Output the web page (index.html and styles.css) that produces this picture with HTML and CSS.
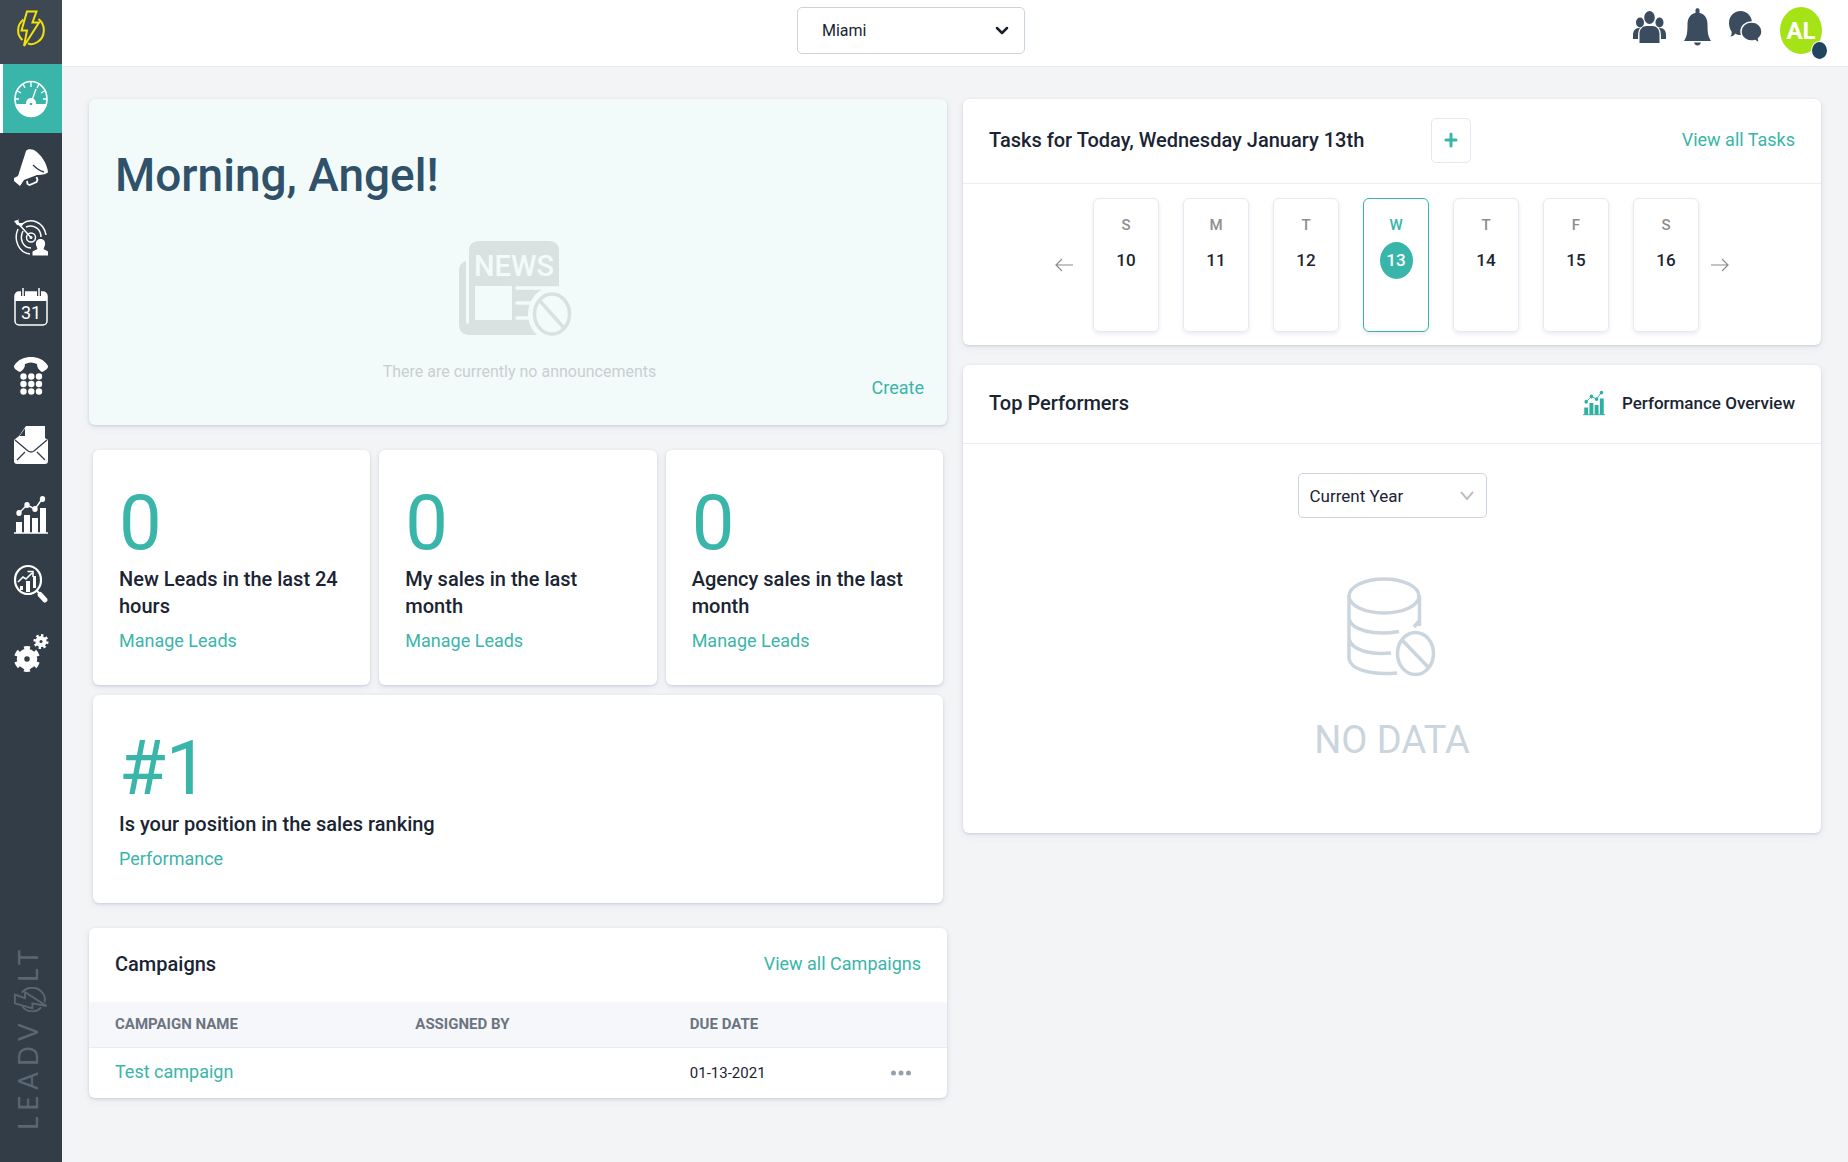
FILE: index.html
```html
<!DOCTYPE html>
<html lang="en">
<head>
<meta charset="utf-8">
<meta name="viewport" content="width=device-width, initial-scale=1">
<title>LeadVolt – Dashboard</title>
<link rel="stylesheet" href="styles.css">
</head>
<body>
<svg class="defs" aria-hidden="true">
  <symbol id="chart" viewBox="0 0 36 40">
    <path d="M3 27h6v11H3zM11 20h6v18h-6zM19 23h6v15h-6zM27 13h6v25h-6z" fill="currentColor"/>
    <path d="M1 38h34M6 18l8-8 8 4 7-10" fill="none" stroke="currentColor" stroke-width="1.4"/>
    <g fill="currentColor"><ellipse cx="6" cy="18" rx="2.7" ry="3"/><ellipse cx="14" cy="10" rx="2.7" ry="3"/><ellipse cx="22" cy="14" rx="2.7" ry="3"/><ellipse cx="29.500" cy="4" rx="2.700" ry="3"/></g>
  </symbol>
  <symbol id="bolt" viewBox="0 0 28 38">
    <g fill="none" stroke="currentColor" stroke-width="2">
      <path d="M10 1.500h9.500L15.500 12.500h6.500L7 36l3-15.500H4.500z"/>
      <path d="M6.500 9.500C-.5 15-.5 25 5.500 30M21.500 9C29 15 28.500 27 20.500 32c-3 2-7 2.500-9.500 1.500"/>
    </g>
  </symbol>
</svg>

<div class="app">
  <aside class="sidebar">
    <a class="brand" href="#" aria-label="LeadVolt home"><svg width="28" height="38"><use href="#bolt"/></svg></a>
    <nav class="nav" aria-label="Main">
      <a class="nav-item active" href="#" aria-label="Dashboard">
        <svg width="36" height="40" viewBox="0 0 36 40">
          <ellipse cx="18" cy="20" rx="16" ry="17.500" fill="none" stroke="#fff" stroke-width="1.600"/>
          <path d="M2 25h32c-2 8-8.500 13-16 13S4 33 2 25z" fill="#fff"/>
          <circle cx="18" cy="24" r="5" fill="#fff"/><circle cx="18" cy="25" r="1.300" fill="#3ab5a9"/>
          <path d="M18 24l5-14M18 3v5M10 5l2 4M26 5l-2 4M4.500 12l3.500 2M31.500 12L28 14M2 20h4M34 20h-4" stroke="#fff" stroke-width="1.400"/>
        </svg>
      </a>
      <a class="nav-item" href="#" aria-label="Campaigns">
        <svg width="36" height="40" viewBox="0 0 36 40">
          <path d="M13 3c1-2 5-2 8-1 8 5 13 14 14 22-1 2-5 3-11 3L11 32l-4 6-6-5V30l4-2z" fill="#fff"/>
          <path d="M20 17c3 3 6 6 11 7" fill="none" stroke="#323d48" stroke-width="1.300"/>
          <path d="M14 33l.500 3 2 1 7-3 1-2-1-3" fill="none" stroke="#fff" stroke-width="1.800"/>
        </svg>
      </a>
      <a class="nav-item" href="#" aria-label="Leads">
        <svg width="36" height="40" viewBox="0 0 36 40">
          <g fill="none" stroke="#fff" stroke-width="1.500">
            <path d="M9 7C18 0 31 5 33 18M5 12C0 23 6 36 17 37M13 10C21 7 28 12 28 20M10 14C6 22 10 31 18 31"/>
            <circle cx="18" cy="20.500" r="4.500"/><path d="M3 4l15 16.500"/>
          </g>
          <path d="M5 1l1 5h5l-2 3-5-1-3-4 4-1z" fill="#fff"/><circle cx="18" cy="20.500" r="1.500" fill="#fff"/>
          <path d="M27.500 22c3.500 0 5 2.500 4.500 6l-1.500 4 4.500 2.500v4H19.500v-4L24.500 32 23 28c-.5-3.500 1-6 4.500-6z" fill="#fff"/>
        </svg>
      </a>
      <a class="nav-item" href="#" aria-label="Calendar">
        <svg width="36" height="40" viewBox="0 0 36 40">
          <rect x="2" y="5" width="32" height="33" rx="4" fill="none" stroke="#fff" stroke-width="1.500"/>
          <path d="M2 14V9c0-3 1-4 4-4h24c3 0 4 1 4 4v5z" fill="#fff"/>
          <path d="M10 1v8M26 1v8" stroke="#323d48" stroke-width="4"/><path d="M10 1v8M26 1v8" stroke="#fff" stroke-width="1.500"/>
          <text x="18" y="32" class="cal-text">31</text>
        </svg>
      </a>
      <a class="nav-item" href="#" aria-label="Dialer">
        <svg width="36" height="40" viewBox="0 0 36 40">
          <path d="M1 10C5 3 12 1 18 1s13 2 17 9c.500 1-1 4-6 6-3-2-5-4-5-8-4-2-8-2-12 0 0 4-2 6-5 8-5-2-6.500-5-6-6z" fill="#fff"/>
          <g fill="#fff"><circle cx="10.500" cy="20.500" r="3.200"/><circle cx="18.300" cy="20.500" r="3.200"/><circle cx="26" cy="20.500" r="3.200"/><circle cx="10.500" cy="28" r="3.200"/><circle cx="18.300" cy="28" r="3.200"/><circle cx="26" cy="28" r="3.200"/><circle cx="10.500" cy="35.500" r="3.200"/><circle cx="18.300" cy="35.500" r="3.200"/><circle cx="26" cy="35.500" r="3.200"/></g>
        </svg>
      </a>
      <a class="nav-item" href="#" aria-label="Mail">
        <svg width="36" height="40" viewBox="0 0 36 40">
          <path d="M13 1h19v12l3 2v21q0 3-3 3H4q-3 0-3-3V15l5-4z" fill="#fff"/>
          <path d="M6.500 11L12 3.500V11z" fill="#323d48"/>
          <path d="M2 15l13 11q3 2 6 0L34 15M4 35l8-8M32 35l-8-8" fill="none" stroke="#323d48" stroke-width="1.300"/>
        </svg>
      </a>
      <a class="nav-item" href="#" aria-label="Performance"><svg width="36" height="40"><use href="#chart"/></svg></a>
      <a class="nav-item" href="#" aria-label="Reports">
        <svg width="36" height="40" viewBox="0 0 36 40">
          <ellipse cx="15" cy="16" rx="13" ry="14" fill="none" stroke="#fff" stroke-width="2.200"/>
          <path d="M24 27l2 2" stroke="#fff" stroke-width="2"/><path d="M27 30.500l5 5.500" stroke="#fff" stroke-width="5" stroke-linecap="round"/>
          <path d="M7 22h3v4H7zM13 17h4v11h-4zM20 12h3v12h-3z" fill="#fff"/>
          <path d="M5 18l5-5 3 2 6-6M14.500 7.500H20V13" fill="none" stroke="#fff" stroke-width="1.600"/>
        </svg>
      </a>
      <a class="nav-item" href="#" aria-label="Settings">
        <svg width="36" height="40" viewBox="0 0 36 40">
          <g fill="none" stroke="#fff">
            <circle cx="14" cy="26" r="6.500" stroke-width="7.500"/>
            <circle cx="14" cy="26" r="11" stroke-width="4" pathLength="12" stroke-dasharray="1 1" stroke-dashoffset=".5" transform="rotate(30 14 26)"/>
            <circle cx="28" cy="8.500" r="3.600" stroke-width="4"/>
            <circle cx="28" cy="8.500" r="6.300" stroke-width="2.500" pathLength="16" stroke-dasharray="1 1"/>
          </g>
        </svg>
      </a>
    </nav>
    <div class="wordmark" aria-label="LeadVolt">
      <span>LEADV</span><svg width="26" height="35"><use href="#bolt"/></svg><span>LT</span>
    </div>
  </aside>

  <div class="page">
    <header class="topbar">
      <div class="select-box office">
        <select aria-label="Office"><option>Miami</option></select>
        <svg width="14" height="10" viewBox="0 0 14 10"><path d="M2 2l5 5 5-5" fill="none" stroke="#18222f" stroke-width="2.500" stroke-linecap="round" stroke-linejoin="round"/></svg>
      </div>
      <div class="tools">
        <button class="tool" aria-label="Team">
          <svg width="33" height="32" viewBox="0 0 33 32" fill="#3c4c5f">
            <ellipse cx="16.500" cy="6.500" rx="5.300" ry="6.500"/><ellipse cx="7" cy="11.500" rx="4" ry="5"/><ellipse cx="26.500" cy="11.500" rx="4" ry="5"/>
            <path d="M6.500 32V23c0-5 3-8 7-8h6c4 0 7 3 7 8v9zM5 28H0v-4c0-4 2-7 6-7h1c-2 3-2 6-2 11zM28 28h5v-4c0-4-2-7-6-7h-1c2 3 2 6 2 11z"/>
          </svg>
        </button>
        <button class="tool" aria-label="Notifications">
          <svg width="27" height="38" viewBox="0 0 27 38" fill="#3c4c5f">
            <path d="M11.500 5V2c0-2.500 4-2.500 4 0v3c6 1 8 6 8 12 0 9 1 12 3.500 16H0c2.500-4 3.500-7 3.500-16 0-6 2-11 8-12zM10 34.500h7c-.5 2-2 3-3.500 3s-3-1-3.500-3z"/>
          </svg>
        </button>
        <button class="tool" aria-label="Messages">
          <svg width="33" height="32" viewBox="0 0 33 32">
            <path d="M11.500 0C18 0 23 5 23 12s-5 12-11.500 12c-2 0-4-.5-5-1.500-1.500 2-3 3-5 3 1-1.500 1.500-3 1-5C1 18.500 0 15.500 0 12 0 5 5 0 11.500 0z" fill="#3c4c5f"/>
            <path d="M22.500 11C28.500 11 33 15 33 20.500c0 3-1.500 5.500-3.500 7 0 1.500.500 2.500 1.500 4-2 0-3.500-1-5-2-6.500 2-14-2-14-9C12 15 16.500 11 22.500 11z" fill="#3c4c5f" stroke="#fff" stroke-width="1.500"/>
          </svg>
        </button>
        <button class="avatar" aria-label="Account">AL<span class="status"></span></button>
      </div>
    </header>

    <main class="content">
      <div class="column">
        <section class="card announce">
          <h1>Morning, Angel!</h1>
          <svg class="news" width="113" height="97" viewBox="0 0 113 97">
            <path d="M7 21v60q0 3 1.500 3T10 81V11Q10 1 20 1h70q10 0 10 10v84H11Q0 95 0 84V31q0-8 7-10z" fill="#d9e2e0"/>
            <rect x="16" y="46" width="37" height="34" rx="1" fill="#f2fbfa"/>
            <path d="M58 48h42M58 63h20M58 78h20" stroke="#f2fbfa" stroke-width="3.500" stroke-linecap="round"/>
            <ellipse cx="93" cy="74" rx="24" ry="27" fill="#f2fbfa"/>
            <ellipse cx="93" cy="74" rx="17.500" ry="20" fill="none" stroke="#d9e0e0" stroke-width="3.500"/>
            <path d="M81 61l24 27" stroke="#d9e0e0" stroke-width="3.500"/>
            <text x="55" y="36" class="news-text">NEWS</text>
          </svg>
          <div class="announce-foot">
            <p>There are currently no announcements</p>
            <a href="#">Create</a>
          </div>
        </section>

        <div class="stats">
          <section class="card stat"><strong>0</strong><h2>New Leads in the last 24 hours</h2><a href="#">Manage Leads</a></section>
          <section class="card stat"><strong>0</strong><h2>My sales in the last month</h2><a href="#">Manage Leads</a></section>
          <section class="card stat"><strong>0</strong><h2>Agency sales in the last month</h2><a href="#">Manage Leads</a></section>
          <section class="card stat wide"><strong>#1</strong><h2>Is your position in the sales ranking</h2><a href="#">Performance</a></section>
        </div>

        <section class="card">
          <div class="card-head campaigns-head"><h2>Campaigns</h2><a href="#">View all Campaigns</a></div>
          <table class="campaigns">
            <thead><tr><th class="c-name">Campaign name</th><th class="c-by">Assigned by</th><th>Due date</th><th class="c-more"></th></tr></thead>
            <tbody><tr>
              <td><a href="#">Test campaign</a></td><td></td><td>01-13-2021</td>
              <td class="c-more"><button aria-label="More actions"><svg width="20" height="6" viewBox="0 0 20 6" fill="#95a1af"><circle cx="2.500" cy="3" r="2.500"/><circle cx="10" cy="3" r="2.500"/><circle cx="17.500" cy="3" r="2.500"/></svg></button></td>
            </tr></tbody>
          </table>
        </section>
      </div>

      <div class="column right">
        <section class="card">
          <div class="card-head tasks-head">
            <h2>Tasks for Today, Wednesday January 13th</h2>
            <button class="add" aria-label="Add task"><svg width="14" height="16" viewBox="0 0 14 16"><path d="M7 2v12M2 8h10" stroke="#3ab5a9" stroke-width="3" stroke-linecap="round"/></svg></button>
            <a href="#">View all Tasks</a>
          </div>
          <div class="week">
            <button class="arrow" aria-label="Previous week"><svg width="18" height="14" viewBox="0 0 18 14"><path d="M18 7H1M7 1L1 7l6 6" fill="none" stroke="#8c8c8c" stroke-width="1.200"/></svg></button>
            <button class="day"><span>S</span><b>10</b></button>
            <button class="day"><span>M</span><b>11</b></button>
            <button class="day"><span>T</span><b>12</b></button>
            <button class="day today"><span>W</span><b>13</b></button>
            <button class="day"><span>T</span><b>14</b></button>
            <button class="day"><span>F</span><b>15</b></button>
            <button class="day"><span>S</span><b>16</b></button>
            <button class="arrow next" aria-label="Next week"><svg width="18" height="14" viewBox="0 0 18 14"><path d="M0 7h17M11 1l6 6-6 6" fill="none" stroke="#8c8c8c" stroke-width="1.200"/></svg></button>
          </div>
        </section>

        <section class="card">
          <div class="card-head perf-head">
            <h2>Top Performers</h2>
            <a class="overview" href="#"><svg width="24" height="26"><use href="#chart"/></svg>Performance Overview</a>
          </div>
          <div class="perf-body">
            <div class="select-box period">
              <select aria-label="Period"><option>Current Year</option></select>
              <svg width="14" height="10" viewBox="0 0 14 10"><path d="M1 1l6 7 6-7" fill="none" stroke="#bcbfc3" stroke-width="2"/></svg>
            </div>
            <svg class="db" width="90" height="102" viewBox="0 0 90 102" fill="none" stroke="#cbd5dd" stroke-width="3.500">
              <ellipse cx="37" cy="20" rx="35" ry="17"/>
              <path d="M2 20v63c2 10 20 16.500 48 14M2 43c3 11 24 17 50 12.500M2 63c3 11 20 16 42 14M72.500 20v30M73 44l-6 7"/>
              <ellipse cx="68.500" cy="77.500" rx="18" ry="21"/><path d="M55 64l27 28"/>
            </svg>
            <p class="no-data">NO DATA</p>
          </div>
        </section>
      </div>
    </main>
  </div>
</div>
</body>
</html>
```
FILE: styles.css
```css
* { box-sizing: border-box; }
body {
  margin: 0;
  background: #f3f4f6;
  color: #1a2433;
  font-family: Roboto, "Noto Sans", sans-serif;
  font-size: 18px;
  line-height: 24px;
}
h1, h2, p { margin: 0; }
h2 { font-size: 20px; font-weight: 500; line-height: 27px; }
a { color: #3ab5a9; text-decoration: none; }
button, select { font: inherit; color: inherit; }
button { padding: 0; border: 0; background: none; cursor: pointer; }
svg { display: block; }
.defs { position: absolute; width: 0; height: 0; }

.app { display: flex; min-height: 100vh; }

.sidebar {
  display: flex;
  flex-direction: column;
  flex: 0 0 62px;
  background: #323d48;
}
.brand {
  display: grid;
  place-items: center;
  height: 64px;
  padding-bottom: 6px;
  background: #3d4853;
  color: #f3e10c;
}
.nav { display: flex; flex-direction: column; height: 624px; }
.nav-item { display: grid; place-items: center; flex: 1; color: #fff; }
.nav-item.active { background: #3ab5a9; box-shadow: inset 3px 0 #fff; }
.cal-text { fill: #fff; font-size: 18px; text-anchor: middle; }
.wordmark {
  display: flex;
  align-items: center;
  margin: auto auto 32px;
  writing-mode: vertical-rl;
  transform: rotate(180deg);
  color: #5b6671;
  font-family: Lato, sans-serif;
  font-size: 26px;
  line-height: 30px;
  letter-spacing: 6px;
}
.wordmark span { padding-left: 6px; }
.wordmark svg { transform: rotate(90deg); }

.page { flex: 1; min-width: 0; }
.topbar {
  display: flex;
  align-items: flex-start;
  justify-content: space-between;
  height: 67px;
  padding: 7px 26px 0 41.15%;
  background: #fff;
  border-bottom: 1px solid #e8edf1;
}
.tools { display: flex; gap: 18px; }
.tool { display: grid; place-items: center; height: 40px; }
.avatar {
  position: relative;
  width: 42px;
  height: 47px;
  border-radius: 50%;
  background: #a5e317;
  color: #fff;
  font-size: 24px;
  font-weight: 700;
}
.status {
  position: absolute;
  right: -6px;
  bottom: -6px;
  width: 17px;
  height: 19px;
  border: 1px solid #fff;
  border-radius: 50%;
  background: #21455e;
}

.select-box { position: relative; }
.select-box select {
  width: 100%;
  height: 100%;
  border: 1px solid #c9d4de;
  border-radius: 5px;
  background: #fff;
  appearance: none;
  font-size: 16px;
}
.select-box svg { position: absolute; right: 16px; top: 50%; margin-top: -5px; pointer-events: none; }
.office { width: 228px; height: 47px; }
.office select { padding: 0 24px; }
.period { width: 189px; height: 45px; }
.select-box.period select { padding: 0 11px; font-size: 17px; }
.period svg { right: 13px; }

.content {
  display: grid;
  grid-template-columns: minmax(0, 1fr) minmax(0, 1fr);
  align-items: start;
  gap: 16px;
  padding: 32px 27px;
}
.column { display: grid; gap: 25px; }
.column.right { gap: 20px; }
.card {
  background: #fff;
  border-radius: 6px;
  box-shadow: 0 1px 3px rgba(70, 90, 130, .22), 0 3px 8px rgba(70, 90, 130, .06);
}

.announce {
  display: flex;
  flex-direction: column;
  padding: 48px 23px 27px 26px;
  background: #f2fbfa;
}
.announce h1 { color: #2f5169; font-size: 46px; font-weight: 500; line-height: 56px; }
.news { align-self: center; margin: 37px 8px 25px 0; }
.news-text { fill: #f2fbfa; font-size: 29px; font-weight: 500; text-anchor: middle; }
.announce-foot { display: grid; grid-template-columns: 1fr auto 1fr; height: 36px; }
.announce-foot p { grid-column: 2; color: #c9cfd1; font-size: 16px; line-height: 20px; }
.announce-foot a { align-self: end; justify-self: end; line-height: 20px; }

.stats { display: grid; grid-template-columns: repeat(3, minmax(0, 1fr)); gap: 10px 9px; padding: 0 4px; }
.stat { display: flex; flex-direction: column; align-items: flex-start; padding: 32px 26px; }
.stat.wide { grid-column: 1 / -1; }
.stat strong { color: #3ab5a9; font-size: 76px; font-weight: 400; line-height: 82px; }
.stat h2 { margin: 2px 0 9px; }

.card-head { display: flex; align-items: center; justify-content: space-between; padding: 0 26px 2px; }
.campaigns-head { height: 74px; }
.campaigns { width: 100%; border-collapse: collapse; table-layout: fixed; }
.campaigns th {
  height: 45px;
  padding: 0 0 0 26px;
  background: #f5f7fa;
  border-bottom: 1px solid #e6ecf1;
  color: #6c7480;
  font-size: 15px;
  font-weight: 700;
  text-align: left;
  text-transform: uppercase;
}
.campaigns td { height: 51px; padding: 0 0 0 26px; font-size: 15px; }
.campaigns td a { font-size: 18px; }
.campaigns .c-name { width: 35%; }
.campaigns .c-by { width: 32%; }
.campaigns .c-more { width: 90px; padding: 0 36px 0 0; }
.c-more button { display: block; margin-left: auto; }

.tasks-head { height: 85px; border-bottom: 1px solid #e8edf2; }
.tasks-head a { margin-left: auto; }
.add {
  display: grid;
  place-items: center;
  width: 40px;
  height: 45px;
  margin-left: 67px;
  border: 1px solid #e2e8ef;
  border-radius: 5px;
}
.week { display: flex; align-items: center; justify-content: center; gap: 24px; padding: 14px 0 13px; }
.arrow { margin-right: -4px; }
.arrow.next { margin: 0 0 0 -12px; }
.day {
  display: flex;
  flex-direction: column;
  align-items: center;
  gap: 7px;
  width: 66px;
  height: 134px;
  padding-top: 16px;
  border: 1px solid #e6e9f0;
  border-radius: 6px;
  box-shadow: 0 2px 4px rgba(70, 90, 130, .12);
}
.day span { color: #8e8e8e; font-size: 15px; font-weight: 500; line-height: 20px; }
.day b { width: 33px; height: 37px; border-radius: 50%; font-size: 17px; font-weight: 500; line-height: 37px; }
.today { border-color: #3ab5a9; }
.today span { color: #3ab5a9; }
.today b { background: #3ab5a9; color: #fff; }

.perf-head { height: 79px; border-bottom: 1px solid #e8edf2; }
.overview { display: flex; align-items: center; gap: 16px; color: #1a2433; font-size: 17px; font-weight: 500; }
.overview svg { color: #2fb0a3; }
.perf-body { display: flex; flex-direction: column; align-items: center; padding: 29px 0 69px; }
.db { margin: 58px 0 38px; }
.no-data { color: #cbd5dd; font-size: 38px; line-height: 48px; }
```
